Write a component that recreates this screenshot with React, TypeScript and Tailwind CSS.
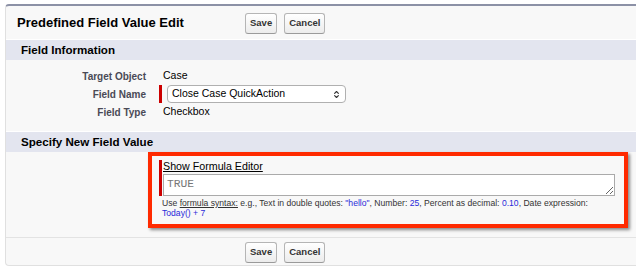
import { ChevronsUpDown } from 'lucide-react';

const font = { fontFamily: '"Liberation Sans", Arial, sans-serif' };

function Btn({ label }: { label: string }) {
  return (
    <button
      type="button"
      className="h-[21px] rounded-[3px] border border-[#b5b5b5] border-b-[#9a9a9a] bg-gradient-to-b from-white to-[#ececec] px-[4px] text-[9.5px] font-bold text-[#333]"
    >
      {label}
    </button>
  );
}

function SectionHead({ title }: { title: string }) {
  return (
    <div className="flex h-[21px] items-center border-t border-white bg-[#e3e5ef] pl-[15px] text-[11.6px] font-bold text-black">
      {title}
    </div>
  );
}

function Row({ label, children }: { label: string; children: React.ReactNode }) {
  return (
    <div className="flex h-[18px] items-center">
      <div className="w-[140px] text-right text-[10px] font-bold text-[#4a4a56]">{label}</div>
      <div className="flex items-center pl-[17px] text-[10.5px] text-black">{children}</div>
    </div>
  );
}

export default function App() {
  return (
    <div className="h-[273px] overflow-hidden bg-white pl-[5px] pt-[4px]" style={font}>
      <div className="rounded-tl-[4px] rounded-bl-[4px] border-l border-b border-t-2 border-l-[#e0e0e0] border-b-[#e0e0e0] border-t-[#8c91a6] bg-[#f8f8f8]">
        {/* Заголовок страницы */}
        <div className="flex h-[33px] items-center pl-[11px] pt-[1px]">
          <div className="w-[228px] text-[13px] font-bold text-black">Predefined Field Value Edit</div>
          <div className="flex gap-[7px]">
            <Btn label="Save" />
            <Btn label="Cancel" />
          </div>
        </div>

        <SectionHead title="Field Information" />
        <div className="pb-[10px] pt-[7px]">
          <Row label="Target Object">Case</Row>
          <Row label="Field Name">
            <span className="-ml-[4px] mr-[5px] h-[18px] w-[3px] bg-[#c00]" />
            <div className="flex h-[18px] w-[179px] items-center justify-between rounded-[4px] border border-[#b0b0b0] bg-white pl-[4px] pr-[4px]">
              Close Case QuickAction
              <ChevronsUpDown size={9} strokeWidth={3} className="text-[#333]" />
            </div>
          </Row>
          <Row label="Field Type">Checkbox</Row>
        </div>

        <SectionHead title="Specify New Field Value" />
        <div className="flex pb-[9px] pl-[142px]">
          <div className="w-[480px] border-4 border-[#ff2a00] px-[7px] pb-[6px] pt-[3px] shadow-[2px_2px_3px_rgba(0,0,0,0.45)]">
            <div className="flex items-center">
              <span className="mr-[1px] h-[14px] w-[3px] bg-[#c00]" />
              <span className="text-[10.7px] leading-[15px] text-black underline">Show Formula Editor</span>
            </div>
            <div className="flex">
              <span className="w-[3px] bg-[#c00]" />
              <textarea
                readOnly
                defaultValue="TRUE"
                className="ml-[1px] h-[22px] w-[452px] resize-y border border-[#aaa] bg-white px-[3px] text-[11.3px] leading-[18px] text-[#777] outline-none"
                style={{ fontFamily: '"Liberation Mono", "Courier New", monospace' }}
              />
            </div>
            <div className="whitespace-nowrap pl-[3px] pt-[2px] text-[8.6px] leading-[10px] text-[#333]">
              Use <span className="underline">formula syntax:</span> e.g., Text in double quotes:{' '}
              <span className="text-[#2a2ad8]">"hello"</span>, Number: <span className="text-[#2a2ad8]">25</span>, Percent
              as decimal: <span className="text-[#2a2ad8]">0.10</span>, Date expression:
              <br />
              <span className="text-[#2a2ad8]">Today() + 7</span>
            </div>
          </div>
        </div>

        {/* Нижние кнопки */}
        <div className="flex h-[28px] items-center border-t border-[#e3e3e3] pl-[239px] pt-[1px]">
          <div className="flex gap-[7px]">
            <Btn label="Save" />
            <Btn label="Cancel" />
          </div>
        </div>
      </div>
    </div>
  );
}
